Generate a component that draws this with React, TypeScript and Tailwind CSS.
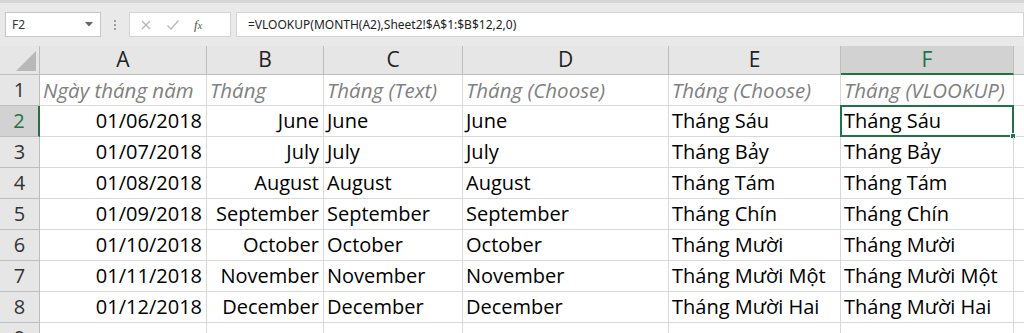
import React from "react";

const cols = ["A", "B", "C", "D", "E", "F"];
const headers = ["Ngày tháng năm", "Tháng", "Tháng (Text)", "Tháng (Choose)", "Tháng (Choose)", "Tháng (VLOOKUP)"];
const data: string[][] = [
  ["01/06/2018", "June", "June", "June", "Tháng Sáu", "Tháng Sáu"],
  ["01/07/2018", "July", "July", "July", "Tháng Bảy", "Tháng Bảy"],
  ["01/08/2018", "August", "August", "August", "Tháng Tám", "Tháng Tám"],
  ["01/09/2018", "September", "September", "September", "Tháng Chín", "Tháng Chín"],
  ["01/10/2018", "October", "October", "October", "Tháng Mười", "Tháng Mười"],
  ["01/11/2018", "November", "November", "November", "Tháng Mười Một", "Tháng Mười Một"],
  ["01/12/2018", "December", "December", "December", "Tháng Mười Hai", "Tháng Mười Hai"],
];

const font = { fontFamily: '"Open Sans", "Noto Sans", sans-serif' };

export default function App() {
  return (
    <div className="w-[1024px] h-[333px] overflow-hidden bg-white" style={font}>
      {/* toolbar */}
      <div className="h-[46px] bg-[#e9e9e9] border-t-[3px] border-[#d6d6d6] flex items-start pt-[9px] pl-[5px]">
        <div className="w-[96px] h-[25px] bg-white border border-[#c6c6c6] flex items-center justify-between pl-[6px] pr-[7px]">
          <span className="text-[12px] text-[#333]" style={{ fontFamily: '"Noto Sans", sans-serif' }}>F2</span>
          <svg width="8" height="5" viewBox="0 0 8 5"><path d="M0 0 L8 0 L4 4.5 Z" fill="#666" /></svg>
        </div>
        <div className="w-[28px] h-[25px] flex flex-col items-center justify-center gap-[2px]">
          <span className="w-[2px] h-[2px] bg-[#a0a0a0]" />
          <span className="w-[2px] h-[2px] bg-[#a0a0a0]" />
          <span className="w-[2px] h-[2px] bg-[#a0a0a0]" />
        </div>
        <div className="w-[102px] h-[25px] bg-white border border-[#d4d4d4] flex items-center pl-[10px] gap-[14px]">
          <svg width="12" height="12" viewBox="0 0 12 12"><path d="M2 2 L10 10 M10 2 L2 10" stroke="#b5b5b5" strokeWidth="1.2" /></svg>
          <svg width="14" height="12" viewBox="0 0 14 12"><path d="M1.5 6.5 L5 10 L12.5 1.5" stroke="#b5b5b5" strokeWidth="1.2" fill="none" /></svg>
          <span className="text-[13px] italic text-[#555] leading-none" style={{ fontFamily: '"Liberation Serif", serif' }}>f<span className="text-[10px]">x</span></span>
        </div>
        <div className="ml-[5px] flex-1 h-[25px] bg-white border border-[#d4d4d4] flex items-center pl-[11px]">
          <span className="text-[12px] text-[#222]" style={{ fontFamily: '"Noto Sans", sans-serif' }}>=VLOOKUP(MONTH(A2),Sheet2!$A$1:$B$12,2,0)</span>
        </div>
      </div>
      {/* grid */}
      <div className="grid grid-cols-[40px_167px_117px_139px_206px_172px_173px_1fr] grid-rows-[29px_repeat(9,31px)]">
        {/* header row */}
        <div className="bg-[#e6e6e6] border-r border-b border-[#bdbdbd] relative">
          <svg className="absolute right-[3px] bottom-[3px]" width="20" height="20" viewBox="0 0 20 20"><path d="M20 0 L20 20 L0 20 Z" fill="#b8b8b8" /></svg>
        </div>
        {cols.map((c) => (
          <div
            key={c}
            className={
              c === "F"
                ? "bg-[#d2d2d2] border-r border-[#bdbdbd] border-b-2 border-b-[#217346] flex items-center justify-center text-[21px] text-[#217346]"
                : "bg-[#e6e6e6] border-r border-b border-[#bdbdbd] flex items-center justify-center text-[21px] text-[#222]"
            }
          >
            {c}
          </div>
        ))}
        <div className="bg-[#e6e6e6] border-b border-[#bdbdbd]" />
        {/* row 1 */}
        <RowHead n={1} />
        {headers.map((h, i) => (
          <div key={i} className="border-r border-b border-[#d9d9d9] flex items-end pb-[1px] pl-[3px] text-[20.5px] italic text-[#808080] whitespace-nowrap overflow-visible leading-[28px]">
            {h}
          </div>
        ))}
        <div className="border-b border-[#d9d9d9]" />
        {data.map((r, ri) => (
          <React.Fragment key={ri}>
            <RowHead n={ri + 2} active={ri === 0} />
            {r.map((v, ci) => {
              const right = ci < 2;
              const sel = ri === 0 && ci === 5;
              return (
                <div
                  key={ci}
                  className={
                    "relative border-r border-b border-[#d9d9d9] flex items-end pb-[1px] text-[20px] leading-[28px] text-black whitespace-nowrap " +
                    (right ? "justify-end pr-[4px]" : "pl-[3px]")
                  }
                >
                  {sel && (
                    <div className="absolute -left-px -top-px right-[-1px] bottom-[-1px] border-2 border-[#217346]">
                      <div className="absolute right-[-4px] bottom-[-4px] w-[6px] h-[6px] bg-[#217346] border border-white" />
                    </div>
                  )}
                  <span className="relative">{v}</span>
                </div>
              );
            })}
            <div className="border-b border-[#d9d9d9]" />
          </React.Fragment>
        ))}
        <RowHead n={9} />
        {cols.map((c) => (
          <div key={c} className="border-r border-[#d9d9d9]" />
        ))}
        <div />
      </div>
    </div>
  );
}

function RowHead({ n, active }: { n: number; active?: boolean }) {
  return (
    <div
      className={
        active
          ? "bg-[#d2d2d2] border-r-2 border-r-[#217346] border-b border-b-[#bdbdbd] flex items-center justify-center text-[20px] text-[#217346]"
          : "bg-[#e6e6e6] border-r border-b border-[#bdbdbd] flex items-center justify-center text-[20px] text-[#333]"
      }
    >
      {n}
    </div>
  );
}
